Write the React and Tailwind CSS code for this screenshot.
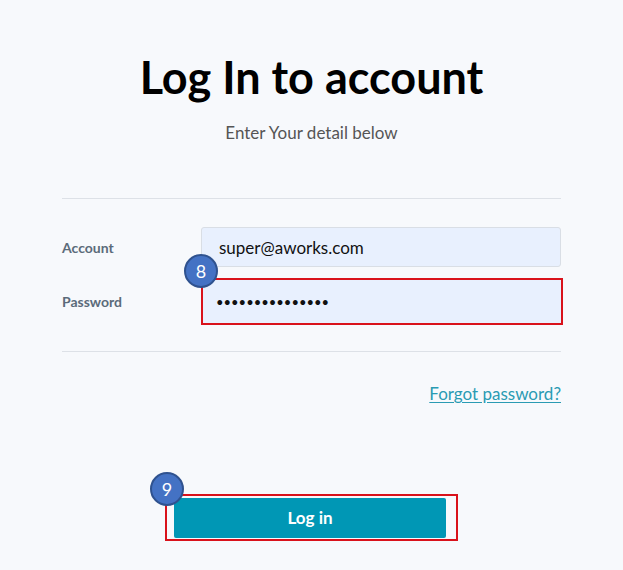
import { useState } from "react";

const Badge = ({ n, className }) => (
  <span
    className={
      "absolute flex h-[34px] w-[34px] items-center justify-center rounded-full border-2 border-[#2f528f] bg-[#4472c4] text-[18px] leading-none text-white " +
      className
    }
  >
    {n}
  </span>
);

export default function App() {
  const [account, setAccount] = useState("super@aworks.com");
  const [password, setPassword] = useState("superpassword12");

  return (
    <div className="min-h-screen bg-[#f7f9fc] font-['Lato','Open_Sans',sans-serif] text-[#111]">
      <div className="mx-auto w-[499px] pt-[51px]">
        {/* Heading */}
        <h1 className="text-center text-[45px] font-bold leading-[52px] text-black">
          Log In to account
        </h1>
        <p className="mt-[20px] text-center text-[17px] leading-5 text-[#555]">
          Enter Your detail below
        </p>

        <hr className="mt-[55px] border-t border-[#dde1e7]" />

        {/* Fields */}
        <div className="mt-[28px] flex flex-col gap-[11px]">
          <div className="flex items-center">
            <label className="w-[139px] text-[14px] font-bold text-[#5b6b7a]">Account</label>
            <input
              type="text"
              value={account}
              onChange={(e) => setAccount(e.target.value)}
              className="h-[40px] flex-1 rounded-[3px] border border-[#d9dee5] bg-[#e8f0fe] px-[17px] text-[17px] text-[#111] outline-none"
            />
          </div>
          <div className="flex items-center">
            <label className="w-[139px] text-[14px] font-bold text-[#5b6b7a]">Password</label>
            <div className="relative flex-1">
              <div className="-mr-[2px] border-2 border-[#d9121b]">
                <input
                  type="password"
                  value={password}
                  onChange={(e) => setPassword(e.target.value)}
                  className="block h-[43px] w-full bg-[#e8f0fe] px-[13px] text-[13px] text-[#111] outline-none"
                />
              </div>
              <Badge n="8" className="-left-[17px] -top-[24px]" />
            </div>
          </div>
        </div>

        <hr className="mt-[26px] border-t border-[#dde1e7]" />

        <div className="mt-[29px] flex justify-end">
          <a href="#" className="text-[17px] text-[#2a9bb3] underline underline-offset-2">
            Forgot password?
          </a>
        </div>

        {/* Submit */}
        <div className="mt-[87px] flex justify-center">
          <div className="relative border-2 border-[#d9121b] pb-[1px] pl-[7px] pr-[10px] pt-[2px]">
            <button
              type="button"
              className="h-[40px] w-[272px] rounded-[2px] bg-[#0097b5] text-[17px] font-bold text-white"
            >
              Log in
            </button>
            <Badge n="9" className="-left-[17px] -top-[24px]" />
          </div>
        </div>
      </div>
    </div>
  );
}
